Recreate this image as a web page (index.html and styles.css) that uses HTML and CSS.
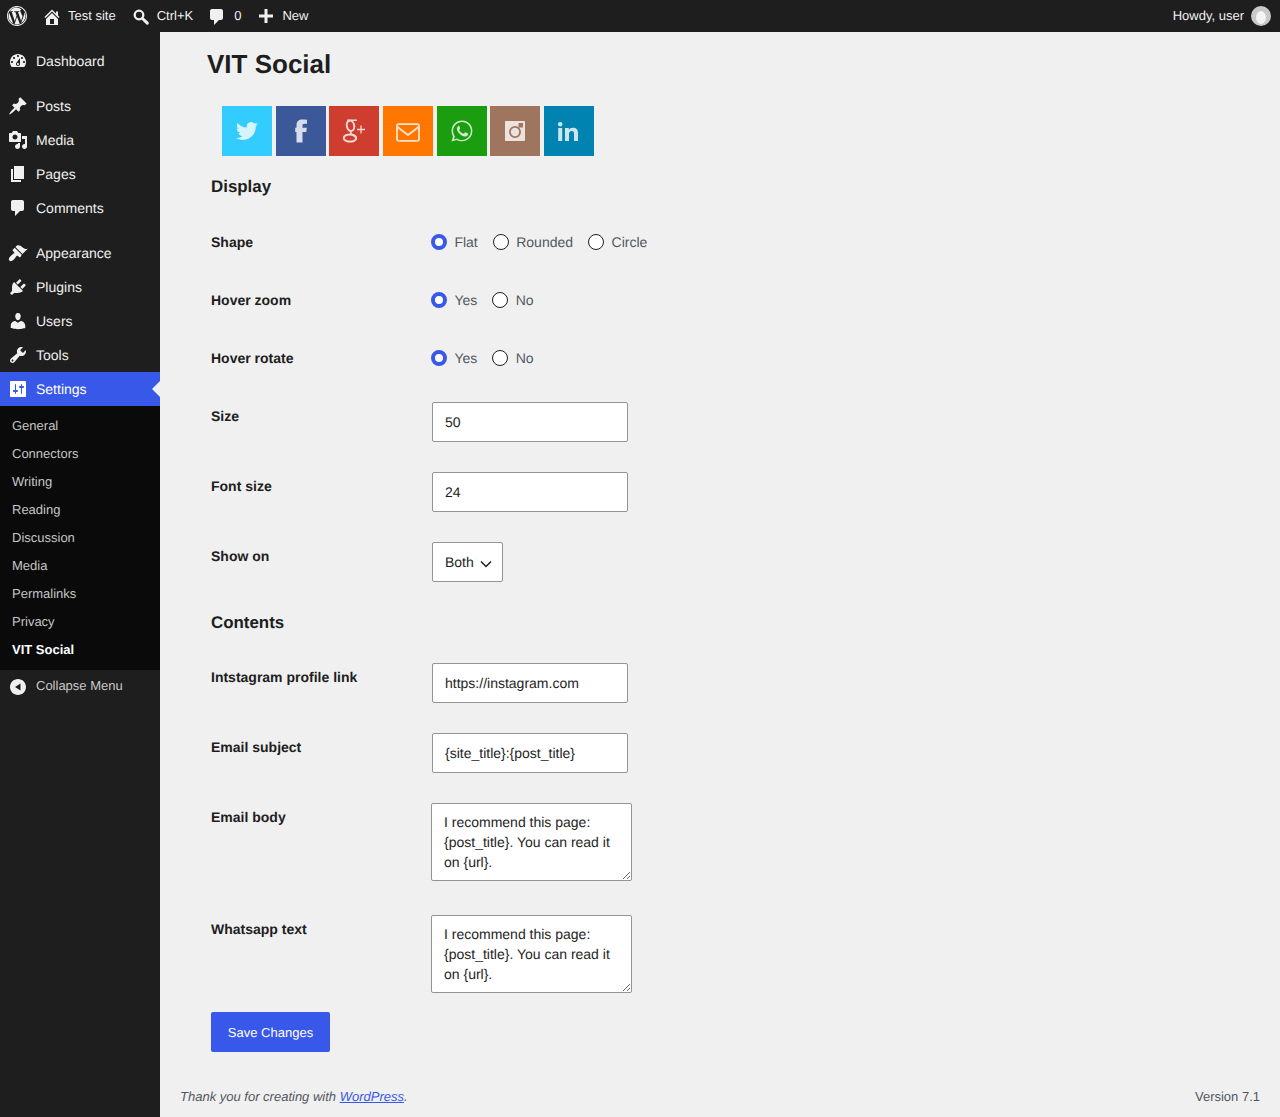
FILE: index.html
```html
<!DOCTYPE html>
<html>
<head>
	<meta charset="UTF-8">
	<title>VIT Social</title>
	<link rel="stylesheet" href="styles.css">
</head>

<body>
	<div id="adminbar">
		<a class="bar-item bar-logo">
			<svg class="bar-icon-lg" viewBox="0 0 20 20"><path fill-rule="evenodd" d="M10 0C4.48 0 0 4.48 0 10s4.48 10 10 10 10-4.48 10-10S15.52 0 10 0zm0 1.01c4.96 0 8.99 4.03 8.99 8.99s-4.03 8.99-8.99 8.99S1.01 14.96 1.01 10 5.04 1.01 10 1.01zM2.26 7.1c-.5 1-.76 1.9-.76 2.9 0 3.3 1.9 6.2 4.7 7.6L2.26 7.1zm12.4 1.8c0-.98-.34-1.66-.64-2.18-.4-.64-.76-1.18-.76-1.82 0-.72.54-1.38 1.3-1.38h.1A8.46 8.46 0 0 0 9.9 1.5c-2.96 0-5.56 1.52-7.08 3.82.2.01.39.01.55.01.88 0 2.25-.1 2.25-.1.46-.03.51.64.05.7 0 0-.46.05-.97.08l3.07 9.13 1.85-5.54-1.31-3.59c-.46-.03-.89-.08-.89-.08-.46-.03-.4-.73.05-.7 0 0 1.4.1 2.22.1.88 0 2.25-.1 2.25-.1.46-.03.51.64.05.7 0 0-.46.05-.97.08l3.05 9.06.84-2.81c.36-1.17.64-2 .64-2.72zM10.1 10.7l-2.53 7.36c.76.22 1.55.34 2.4.34.98 0 1.93-.17 2.8-.48l-.06-.12-2.6-7.1zm7.25-4.78c.03.27.05.56.05.87 0 .86-.16 1.82-.64 3.03l-2.57 7.44a8.46 8.46 0 0 0 3.16-11.34z"/></svg>
		</a>
		<a class="bar-item bar-home">
			<svg class="bar-icon" viewBox="0 0 20 20"><path d="M16 8.5l1.53 1.53-1.06 1.06L10 4.62l-6.47 6.47-1.06-1.06L10 2.5l4 4v-2h2v4zm-6-2.46l6 5.99V18H4v-5.97zM12 17v-5H8v5h4z"/></svg>
			<span>Test site</span>
		</a>
		<a class="bar-item bar-search">
			<svg class="bar-icon" viewBox="0 0 20 20"><circle cx="7" cy="8" r="4.3" fill="none" stroke="#f0f0f1" stroke-width="2.3"/><path d="M10.500 11.500l4.800 4.600" stroke="#f0f0f1" stroke-width="3" stroke-linecap="round"/></svg>
			<span>Ctrl+K</span>
		</a>
		<a class="bar-item bar-comments">
			<svg class="bar-icon" viewBox="0 0 20 20"><path d="M5 2h9c1.1 0 2 .9 2 2v7c0 1.1-.9 2-2 2h-2l-5 5v-5H5c-1.1 0-2-.9-2-2V4c0-1.1.9-2 2-2z"/></svg>
			<span>0</span>
		</a>
		<a class="bar-item bar-new">
			<svg class="bar-icon" viewBox="0 0 20 20"><path d="M17 7.500v3h-5.500V16h-3v-5.500H3v-3h5.500V2h3v5.500z"/></svg>
			<span>New</span>
		</a>
		<a class="bar-item bar-account">
			<span>Howdy, user</span>
			<span class="avatar"><span class="avatar-head"></span></span>
		</a>
	</div>

	<div id="wrap">
		<div id="sidebar">
			<ul class="menu menu-first">
				<li class="menu-item">
					<svg class="menu-icon" viewBox="0 0 20 20"><path fill-rule="evenodd" d="M3.76 16h12.48c1.1-1.37 1.76-3.11 1.76-5 0-4.42-3.58-8-8-8s-8 3.58-8 8c0 1.89.66 3.63 1.76 5zM10 4c.55 0 1 .45 1 1s-.45 1-1 1-1-.45-1-1 .45-1 1-1zM6 6c.55 0 1 .45 1 1s-.45 1-1 1-1-.45-1-1 .45-1 1-1zm8 0c.55 0 1 .45 1 1s-.45 1-1 1-1-.45-1-1 .45-1 1-1zm-5.37 5.55L12 7v6c0 1.1-.9 2-2 2s-2-.9-2-2c0-.57.24-1.08.63-1.45zM4 10c.55 0 1 .45 1 1s-.45 1-1 1-1-.45-1-1 .45-1 1-1zm12 0c.55 0 1 .45 1 1s-.45 1-1 1-1-.45-1-1 .45-1 1-1zm-5 3c0-.55-.45-1-1-1s-1 .45-1 1 .45 1 1 1 1-.45 1-1z"/></svg>
					<span>Dashboard</span>
				</li>
			</ul>
			<ul class="menu">
				<li class="menu-item">
					<svg class="menu-icon" viewBox="0 0 20 20"><path d="M10.44 3.02l1.82-1.82 6.36 6.35-1.83 1.82c-1.05-.68-2.48-.57-3.41.36l-.75.75c-.92.93-1.04 2.35-.35 3.41l-1.83 1.82-2.41-2.41-2.8 2.79c-.42.42-3.38 2.71-3.8 2.29s1.86-3.39 2.28-3.81l2.79-2.79L4.1 9.36l1.83-1.82c1.05.69 2.48.57 3.4-.36l.75-.75c.93-.92 1.05-2.35.36-3.41z"/></svg>
					<span>Posts</span>
				</li>
				<li class="menu-item">
					<svg class="menu-icon" viewBox="0 0 20 20"><path fill-rule="evenodd" d="M13 11V4c0-.55-.45-1-1-1h-1.67L9 1H5L3.67 3H2c-.55 0-1 .45-1 1v7c0 .55.45 1 1 1h10c.55 0 1-.45 1-1zM7 4.5c1.38 0 2.5 1.12 2.5 2.5S8.38 9.5 7 9.5 4.5 8.38 4.5 7 5.62 4.5 7 4.5zM14 6h5v10.5c0 1.38-1.12 2.5-2.5 2.5S14 17.88 14 16.5s1.12-2.5 2.5-2.5c.17 0 .34.02.5.05V9h-3V6zm-4 8.05V13h2v3.5c0 1.38-1.12 2.5-2.5 2.5S7 17.88 7 16.5 8.12 14 9.5 14c.17 0 .34.02.5.05z"/></svg>
					<span>Media</span>
				</li>
				<li class="menu-item">
					<svg class="menu-icon" viewBox="0 0 20 20"><path d="M6 15V2h10v13H6zm-1 1h8v2H3V5h2v11z"/></svg>
					<span>Pages</span>
				</li>
				<li class="menu-item">
					<svg class="menu-icon" viewBox="0 0 20 20"><path d="M5 2h9c1.1 0 2 .9 2 2v7c0 1.1-.9 2-2 2h-2l-5 5v-5H5c-1.1 0-2-.9-2-2V4c0-1.1.9-2 2-2z"/></svg>
					<span>Comments</span>
				</li>
			</ul>
			<ul class="menu">
				<li class="menu-item">
					<svg class="menu-icon" viewBox="0 0 20 20"><path d="M14.48 11.06L7.41 3.99l1.5-1.5c.5-.56 2.3-.47 3.51.32 1.21.8 1.43 1.28 2.91 2.1 1.18.64 2.45 1.26 4.45.85zm-.71.71L6.7 4.7 4.93 6.47c-.39.39-.39 1.02 0 1.41l1.06 1.06c.39.39.39 1.03 0 1.42-.6.6-1.43 1.11-2.21 1.69-.35.26-.7.53-1.01.84-1.34 1.34-2.77 3.29-1.36 4.69 1.4 1.41 3.35-.02 4.69-1.36.31-.31.58-.66.84-1.01.58-.78 1.09-1.61 1.69-2.21.39-.39 1.03-.39 1.42 0l1.06 1.06c.39.39 1.02.39 1.41 0z"/></svg>
					<span>Appearance</span>
				</li>
				<li class="menu-item">
					<svg class="menu-icon" viewBox="0 0 20 20"><path d="M13.11 4.36L9.87 7.6 8 5.73l3.24-3.24c.35-.34 1.05-.2 1.56.32.52.51.66 1.21.31 1.55zm-8 1.77l.91-1.12 9.01 9.01-1.19.84c-.71.71-2.63 1.16-3.82 1.16H6.14L4.9 17.26c-.59.59-1.54.59-2.12 0-.59-.58-.59-1.53 0-2.12l1.24-1.24v-3.88c0-1.13.4-3.19 1.09-3.89zm7.26 3.97l3.24-3.24c.34-.35 1.04-.21 1.55.31.52.51.66 1.21.31 1.55l-3.24 3.25z"/></svg>
					<span>Plugins</span>
				</li>
				<li class="menu-item">
					<svg class="menu-icon" viewBox="0 0 20 20"><path d="M10 9.25c-2.27 0-2.73-3.44-2.73-3.44C7 4.02 7.82 2 9.97 2c2.16 0 2.98 2.02 2.71 3.81 0 0-.41 3.44-2.68 3.44zm0 2.57L12.72 10c2.39 0 4.52 2.33 4.52 4.53v2.49s-3.65 1.13-7.24 1.13c-3.65 0-7.24-1.13-7.24-1.13v-2.49c0-2.25 1.94-4.48 4.47-4.48z"/></svg>
					<span>Users</span>
				</li>
				<li class="menu-item">
					<svg class="menu-icon" viewBox="0 0 20 20"><path fill-rule="evenodd" d="M16.68 9.77c-1.34 1.34-3.3 1.67-4.95.99l-5.41 6.52c-.99.99-2.59.99-3.58 0s-.99-2.59 0-3.57l6.52-5.42c-.68-1.65-.35-3.61.99-4.95 1.28-1.28 3.12-1.62 4.72-1.06l-2.89 2.89 2.82 2.82 2.86-2.87c.53 1.58.18 3.39-1.08 4.65zM3.81 16.21c.4.39 1.04.39 1.43 0 .4-.4.4-1.04 0-1.43-.39-.4-1.03-.4-1.43 0-.39.39-.39 1.03 0 1.43z"/></svg>
					<span>Tools</span>
				</li>
				<li class="menu-item menu-current">
					<svg class="menu-icon" viewBox="0 0 20 20"><path fill-rule="evenodd" d="M18 16V3c0-.6-.4-1-1-1H3c-.6 0-1 .4-1 1v14c0 .6.4 1 1 1h14c.6 0 1-.4 1-1zM8 11h1c.55 0 1 .45 1 1s-.45 1-1 1H8v1.500c0 .28-.22.5-.5.5s-.5-.22-.5-.5V13H6c-.55 0-1-.45-1-1s.45-1 1-1h1V5.500c0-.28.22-.5.5-.5s.5.22.5.5V11zm5-2h-1c-.55 0-1-.45-1-1s.45-1 1-1h1V5.500c0-.28.22-.5.5-.5s.5.22.5.5V7h1c.55 0 1 .45 1 1s-.45 1-1 1h-1v5.500c0 .28-.22.5-.5.5s-.5-.22-.5-.5V9z"/></svg>
					<span>Settings</span>
				</li>
			</ul>
			<ul class="submenu">
				<li>General</li>
				<li>Connectors</li>
				<li>Writing</li>
				<li>Reading</li>
				<li>Discussion</li>
				<li>Media</li>
				<li>Permalinks</li>
				<li>Privacy</li>
				<li class="submenu-current">VIT Social</li>
			</ul>
			<div class="collapse">
				<svg class="menu-icon" viewBox="0 0 20 20"><path fill-rule="evenodd" d="M18 10c0-4.42-3.58-8-8-8s-8 3.58-8 8 3.58 8 8 8 8-3.58 8-8zm-5.500-3.500v7L7 10z"/></svg>
				<span>Collapse Menu</span>
			</div>
		</div>

		<div id="main">
			<div id="content">
				<h1>VIT Social</h1>

				<div class="social-row">
					<div class="social social-twitter">
						<svg viewBox="0 0 24 24" width="22" height="22"><path d="M23.95 4.57a10 10 0 0 1-2.82.77 4.96 4.96 0 0 0 2.16-2.72c-.95.55-2 .96-3.13 1.18a4.92 4.92 0 0 0-8.38 4.49C7.69 8.1 4.07 6.13 1.64 3.16a4.82 4.82 0 0 0-.67 2.48c0 1.71.87 3.21 2.19 4.1a4.9 4.9 0 0 1-2.23-.62v.06a4.92 4.92 0 0 0 3.95 4.83 5 5 0 0 1-2.21.08 4.94 4.94 0 0 0 4.6 3.42 9.87 9.87 0 0 1-6.1 2.1c-.39 0-.78-.02-1.17-.06a14 14 0 0 0 7.56 2.2c9.05 0 14-7.49 14-13.98 0-.21 0-.42-.02-.63A9.94 9.94 0 0 0 24 4.59z"/></svg>
					</div>
					<div class="social social-facebook">
						<svg viewBox="0 0 24 24" width="24" height="24"><path d="M7.500 23.400V13H6.200V8.800h1.300V6C7.500 2.300 9.800.4 13.300.4c1.800 0 3.800.1 4.700.3v4h-2.600c-1.500 0-1.900.7-1.900 2.100v2h4.300l-.5 4.200h-3.800v10.400z"/></svg>
					</div>
					<div class="social social-google">
						<svg class="outline" viewBox="0 0 24 24" width="24" height="24"><ellipse cx="8.500" cy="6.800" rx="3.700" ry="5.200" stroke-width="2" transform="rotate(-12 8.500 6.800)"/><ellipse cx="8" cy="19" rx="6.200" ry="3.600" stroke-width="2"/><path d="M5 1.200h10M9.500 12.600c-1.800 1.300-.8 2.200 1.700 3.800 1.200.8 2.200 1.500 2.600 2.300" stroke-width="1.500"/><path d="M19 6.500v8M15 10.500h8" stroke-width="1.300"/></svg>
					</div>
					<div class="social social-email">
						<svg class="outline" viewBox="0 0 24 24" width="24" height="24"><rect x="1" y="5.200" width="22" height="16.600" rx="1.800" stroke-width="1.800"/><path d="M1.500 8l10.500 8 10.500-8" stroke-width="1.800"/></svg>
					</div>
					<div class="social social-whatsapp">
						<svg viewBox="0 0 24 24" width="24" height="24"><path fill-rule="evenodd" d="M12 1.600C6.200 1.600 1.600 6.200 1.600 12c0 2 .5 3.800 1.500 5.400L1.400 22.600l5.300-1.700c1.600.9 3.400 1.400 5.300 1.400 5.800 0 10.400-4.600 10.400-10.300C22.400 6.200 17.800 1.600 12 1.600zm0 1.500c4.900 0 8.900 4 8.900 8.900s-4 8.900-8.900 8.900c-1.800 0-3.500-.5-5-1.500l-3.100 1 1-3C3.700 15.500 3.100 13.800 3.100 12c0-4.900 4-8.900 8.900-8.900z"/><path d="M8.800 7.100c-.3 0-.6.1-.9.4-.5.5-1 1.300-1 2.300 0 1.400.8 2.700 1 3 .2.2 1.900 3 4.600 4.100 2.200.9 2.700.7 3.200.7.800-.1 2-.8 2.200-1.500.2-.7.2-1.300.2-1.500-.1-.1-.3-.2-.6-.4-.3-.1-1.800-.9-2-1-.3-.1-.5-.1-.7.2-.2.3-.8 1-1 1.100-.2.2-.3.2-.6.1-.3-.2-1.200-.5-2.300-1.400-.9-.8-1.400-1.700-1.600-2-.2-.3 0-.4.1-.6l.4-.5c.1-.2.2-.3.3-.5.1-.2 0-.4 0-.5-.1-.2-.7-1.700-.9-2.300-.2-.5-.4-.5-.6-.5z"/></svg>
					</div>
					<div class="social social-instagram">
						<svg viewBox="0 0 24 24" width="24" height="24"><path fill-rule="evenodd" d="M3 2h18c.6 0 1 .4 1 1v18c0 .6-.4 1-1 1H3c-.6 0-1-.4-1-1V3c0-.6.4-1 1-1zM15.500 4v4.500H20V4zM12 7a6 6 0 1 0 0 12 6 6 0 0 0 0-12zm0 1.800a4.200 4.200 0 1 1 0 8.400 4.200 4.200 0 0 1 0-8.400z"/></svg>
					</div>
					<div class="social social-linkedin">
						<svg viewBox="0 0 24 24" width="24" height="24"><path d="M1.200 9h4v13h-4zM3.200 3a2.300 2.300 0 1 1 0 4.600 2.300 2.300 0 0 1 0-4.600zM8 9h3.800v1.800c.7-1.200 2.200-2.100 4.200-2.100 4.100 0 5 2.500 5 6V22h-4v-6.600c0-1.700-.1-3.400-2.200-3.400s-2.800 1.600-2.800 3.300V22H8z"/></svg>
					</div>
				</div>

				<form class="settings">
					<h2 class="section-title">Display</h2>

					<div class="row row-radio">
						<div class="row-label">Shape</div>
						<div class="radios">
							<label class="radio"><input type="radio" name="shape" checked>Flat</label>
							<label class="radio"><input type="radio" name="shape">Rounded</label>
							<label class="radio"><input type="radio" name="shape">Circle</label>
						</div>
					</div>
					<div class="row row-radio">
						<div class="row-label">Hover zoom</div>
						<div class="radios">
							<label class="radio"><input type="radio" name="zoom" checked>Yes</label>
							<label class="radio"><input type="radio" name="zoom">No</label>
						</div>
					</div>
					<div class="row row-radio">
						<div class="row-label">Hover rotate</div>
						<div class="radios">
							<label class="radio"><input type="radio" name="rotate" checked>Yes</label>
							<label class="radio"><input type="radio" name="rotate">No</label>
						</div>
					</div>
					<div class="row">
						<div class="row-label">Size</div>
						<input class="text-input" type="text" value="50">
					</div>
					<div class="row">
						<div class="row-label">Font size</div>
						<input class="text-input" type="text" value="24">
					</div>
					<div class="row">
						<div class="row-label">Show on</div>
						<select class="select-input">
							<option>Both</option>
						</select>
					</div>

					<h2 class="section-title section-contents">Contents</h2>

					<div class="row">
						<div class="row-label">Intstagram profile link</div>
						<input class="text-input" type="text" value="https://instagram.com">
					</div>
					<div class="row">
						<div class="row-label">Email subject</div>
						<input class="text-input" type="text" value="{site_title}:{post_title}">
					</div>
					<div class="row row-area">
						<div class="row-label">Email body</div>
						<textarea class="text-area" rows="3">I recommend this page: {post_title}. You can read it on {url}.</textarea>
					</div>
					<div class="row row-area">
						<div class="row-label">Whatsapp text</div>
						<textarea class="text-area" rows="3">I recommend this page: {post_title}. You can read it on {url}.</textarea>
					</div>

					<button class="save-btn" type="button">Save Changes</button>
				</form>
			</div>

			<div id="footer">
				<span class="footer-thanks">Thank you for creating with <a href="#">WordPress</a>.</span>
				<span>Version 7.1</span>
			</div>
		</div>
	</div>
</body>
</html>
```

FILE: styles.css
```css
* {
	box-sizing: border-box;
}

html, body {
	margin: 0;
	padding: 0;
}

body {
	background-color: #f0f0f0;
	color: #1e1e1e;
	font-family: "Liberation Sans", Arial, sans-serif;
	font-size: 14px;
	text-rendering: geometricPrecision;
	height: 1117px;
	overflow: hidden;
}

ul {
	list-style: none;
	margin: 0;
	padding: 0;
}

/* top bar */

#adminbar {
	height: 32px;
	background-color: #1e1e1e;
	color: #f0f0f1;
	font-size: 13px;
	display: flex;
	align-items: center;
}

.bar-item {
	display: flex;
	align-items: center;
}

.bar-item span {
	padding-bottom: 2px;
}

.bar-item svg {
	fill: #f0f0f1;
	margin-top: 1px;
}

.bar-icon {
	width: 20px;
	height: 20px;
}

.bar-icon-lg {
	width: 20px;
	height: 20px;
}

.bar-logo {
	margin-left: 7px;
}

.bar-logo svg {
	margin-top: 0;
}

.bar-home {
	margin-left: 15px;
	gap: 6px;
}

.bar-search {
	margin-left: 16px;
	gap: 5px;
}

.bar-comments {
	margin-left: 14px;
	gap: 7px;
}

.bar-new {
	margin-left: 15px;
	gap: 6px;
}

.bar-account {
	margin-left: auto;
	margin-right: 9px;
	gap: 7px;
}

.bar-item .avatar {
	width: 20px;
	height: 20px;
	padding: 0;
	border-radius: 50%;
	background-color: #c9c9c9;
	display: flex;
	justify-content: center;
	align-items: center;
	overflow: hidden;
}

.bar-item .avatar-head {
	width: 10px;
	height: 13px;
	padding: 0;
	margin-top: 3px;
	border-radius: 50%;
	background-color: #f4f4f4;
}

/* side menu */

#wrap {
	display: flex;
	height: 1085px;
}

#sidebar {
	width: 160px;
	flex-shrink: 0;
	background-color: #1e1e1e;
	color: #f0f0f1;
}

.menu {
	margin-top: 11px;
}

.menu-first {
	margin-top: 12px;
}

.menu-item {
	height: 34px;
	display: flex;
	align-items: center;
	gap: 8px;
	padding-left: 8px;
	position: relative;
}

.menu-icon {
	width: 20px;
	height: 20px;
	fill: #f0f0f1;
	flex-shrink: 0;
}

.menu-current {
	background-color: #3858e9;
	color: #fff;
}

.menu-current .menu-icon {
	fill: #fff;
}

.menu-current::after {
	content: "";
	position: absolute;
	right: 0;
	top: 9px;
	border: 8px solid transparent;
	border-right-color: #f0f0f0;
	border-left-width: 0;
}

.submenu {
	background-color: #0a0a0a;
	color: #c5c5c5;
	font-size: 13px;
	padding: 6px 0;
}

.submenu li {
	height: 28px;
	line-height: 28px;
	padding-left: 12px;
}

.submenu .submenu-current {
	color: #fff;
	font-weight: bold;
}

.collapse {
	height: 34px;
	display: flex;
	align-items: center;
	gap: 8px;
	padding-left: 8px;
	font-size: 13px;
	color: #c9c9c9;
}

.collapse span {
	padding-bottom: 3px;
}

/* content */

#main {
	flex: 1;
	display: flex;
	flex-direction: column;
}

#content {
	padding-left: 47px;
	flex: 1;
}

h1 {
	font-size: 26px;
	font-weight: bold;
	line-height: 40px;
	margin: 12px 0 0;
}

.social-row {
	display: flex;
	gap: 3.68px;
	margin: 22px 0 0 15px;
}

.social {
	width: 50px;
	height: 50px;
	display: flex;
	justify-content: center;
	align-items: center;
}

.social svg {
	fill: #fff;
	opacity: 0.8;
}

.social svg.outline {
	fill: none;
	stroke: #fff;
}

.social-twitter { background-color: #33ccff; }
.social-facebook { background-color: #3b5998; }
.social-google { background-color: #cf3d2e; }
.social-email { background-color: #ff7700; }
.social-whatsapp { background-color: #1a9e10; }
.social-instagram { background-color: #a0755d; }
.social-linkedin { background-color: #0083b0; }

.settings {
	padding-left: 4px;
}

.section-title {
	font-size: 16.9px;
	font-weight: bold;
	line-height: 24px;
	margin: 19px 0 14px;
}

.section-contents {
	margin: 14px 0 13px;
}

.row {
	display: flex;
	align-items: flex-start;
	padding: 15px 0;
}

.row-radio {
	align-items: center;
	height: 58px;
	padding: 0;
}

.row-area {
	padding: 15px 0 19px;
}

.row-label {
	width: 220px;
	flex-shrink: 0;
	font-weight: bold;
	line-height: 20px;
	padding-top: 4px;
}

.row-radio .row-label {
	padding-top: 0;
}

.radios {
	display: flex;
	gap: 15.1px;
}

.radio {
	display: flex;
	align-items: center;
	gap: 7.4px;
	color: #50575e;
}

.radio input {
	appearance: none;
	width: 16px;
	height: 16px;
	margin: 0;
	border: 1px solid #1e1e1e;
	border-radius: 50%;
	background-color: #fff;
}

.radio input:checked {
	border: 4px solid #3858e9;
}

.text-input {
	width: 196px;
	height: 40px;
	margin: 0 0 0 1px;
	padding: 0 12px;
	border: 1px solid #949494;
	border-radius: 2px;
	background-color: #fff;
	color: #1e1e1e;
	font-family: inherit;
	font-size: 14px;
	text-rendering: geometricPrecision;
}

.select-input {
	appearance: none;
	width: 71px;
	height: 40px;
	margin: 0 0 0 1px;
	padding: 0 12px;
	border: 1px solid #949494;
	border-radius: 2px;
	background: #fff url("data:image/svg+xml,%3Csvg xmlns='http://www.w3.org/2000/svg' width='12' height='8'%3E%3Cpath d='M1 1.500l5 5 5-5' fill='none' stroke='%231e1e1e' stroke-width='1.500'/%3E%3C/svg%3E") no-repeat 47px 17px;
	color: #1e1e1e;
	font-family: inherit;
	font-size: 14px;
	text-rendering: geometricPrecision;
}

.text-area {
	display: block;
	width: 201px;
	height: 78px;
	margin: 0;
	padding: 8px 12px;
	border: 1px solid #949494;
	border-radius: 2px;
	background-color: #fff;
	color: #1e1e1e;
	font-family: inherit;
	font-size: 14px;
	line-height: 20px;
	text-rendering: geometricPrecision;
}

.save-btn {
	display: block;
	width: 119px;
	height: 40px;
	border: 0;
	border-radius: 2px;
	background-color: #3858e9;
	color: #fff;
	font-family: inherit;
	font-size: 13px;
	text-rendering: geometricPrecision;
}

#footer {
	display: flex;
	justify-content: space-between;
	padding: 0 20px 10px;
	font-size: 13px;
	line-height: 20px;
	color: #50575e;
}

.footer-thanks {
	font-style: italic;
}

#footer a {
	color: #3858e9;
}
```
